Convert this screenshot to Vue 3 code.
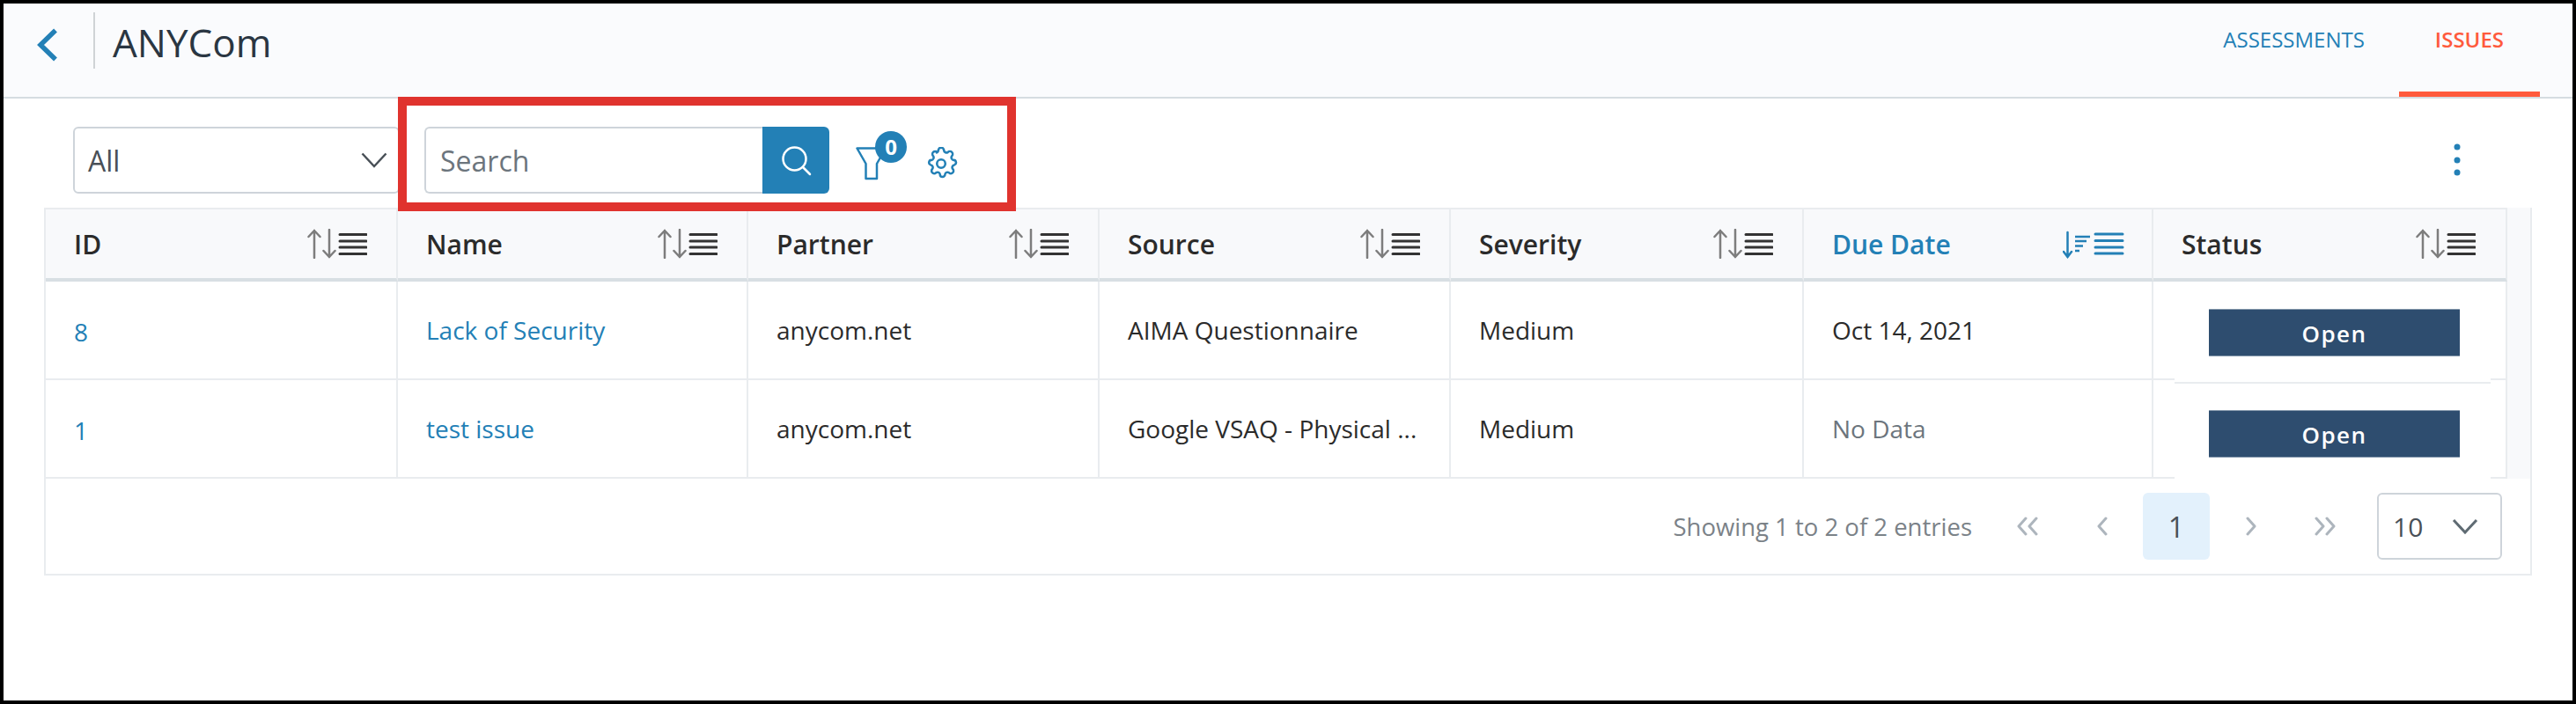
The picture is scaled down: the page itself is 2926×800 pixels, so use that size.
<script setup>
import { ref } from "vue";

const columns = ref([
	{ label: "ID", width: 400 },
	{ label: "Name", width: 398 },
	{ label: "Partner", width: 399 },
	{ label: "Source", width: 399 },
	{ label: "Severity", width: 401 },
	{ label: "Due Date", width: 397, active: true },
	{ label: "Status", width: 402 },
]);

const rows = ref([
	{ id: 8, name: "Lack of Security", partner: "anycom.net", source: "AIMA Questionnaire", severity: "Medium", due: "Oct 14, 2021", status: "Open" },
	{ id: 1, name: "test issue", partner: "anycom.net", source: "Google VSAQ - Physical ...", severity: "Medium", due: "No Data", status: "Open" },
]);
</script>

<template>
	<div class="frame">
		<header class="topbar">
			<button class="back" aria-label="Back">
				<svg width="24" height="38" viewBox="0 0 24 38"><path d="M21 2.5 4 19l17 16.5" fill="none" stroke="#2380b6" stroke-width="5.5" /></svg>
			</button>
			<h1 class="title">ANYCom</h1>
			<nav class="tabs">
				<a class="tab">ASSESSMENTS</a>
				<a class="tab tab-active">ISSUES</a>
			</nav>
		</header>

		<div class="toolbar">
			<div class="select select-all">
				<span>All</span>
				<svg width="30" height="18" viewBox="0 0 30 18"><path d="M1.5 1.5 15 16 28.500 1.500" fill="none" stroke="#495057" stroke-width="2.500" /></svg>
			</div>
			<div class="search">
				<input class="search-input" type="text" placeholder="Search" />
				<button class="search-btn" aria-label="Search">
					<svg width="36" height="36" viewBox="0 0 36 36" fill="none" stroke="#fff" stroke-width="2.500" stroke-linecap="round"><circle cx="16.500" cy="16.500" r="13" /><path d="m26 26 8 8" /></svg>
				</button>
			</div>
			<div class="filter">
				<svg width="36" height="38" viewBox="0 0 36 38" fill="none" stroke="#2380b6" stroke-width="2.500" stroke-linejoin="round"><path d="M1.500 1.500H34L24 19v17H11.500V19z" /></svg>
				<span class="badge">0</span>
			</div>
			<svg class="gear" width="38" height="38" viewBox="0 0 24 24" fill="none" stroke="#2380b6" stroke-width="1.600" stroke-linejoin="round"><circle cx="12" cy="12" r="3" /><path d="M10 2.500a1.800 1.800 0 0 1 4 0c.2 1.400 1.800 2 2.900 1.200a1.800 1.800 0 0 1 2.800 2.800c-.8 1.100-.2 2.700 1.200 2.900a1.800 1.800 0 0 1 .6 3.500c-1.400.2-2 1.800-1.200 2.900a1.800 1.800 0 0 1-2.600 2.700c-1.100-.8-2.700-.2-2.900 1.200a1.800 1.800 0 0 1-3.600 0c-.2-1.400-1.800-2-2.900-1.200a1.800 1.800 0 0 1-2.600-2.700c.8-1.100.2-2.700-1.200-2.900a1.800 1.800 0 0 1 .6-3.500c1.400-.2 2-1.800 1.200-2.900a1.800 1.800 0 0 1 2.800-2.800C8.200 4.500 9.800 3.900 10 2.500z" /></svg>
			<svg class="kebab" width="10" height="38" viewBox="0 0 10 38" fill="#2380b6"><circle cx="5" cy="4" r="3.500" /><circle cx="5" cy="19" r="3.500" /><circle cx="5" cy="33" r="3.500" /></svg>
		</div>

		<div class="table-box">
			<div class="table-scroll">
				<table class="grid">
					<colgroup>
						<col v-for="col in columns" :key="col.label" :style="{ width: col.width + 'px' }" />
					</colgroup>
					<thead>
						<tr>
							<th v-for="col in columns" :key="col.label" :class="{ active: col.active }">
								<div class="th-inner">
									<span>{{ col.label }}</span>
									<svg v-if="!col.active" width="68" height="34" viewBox="0 0 68 34" fill="none" stroke-linecap="round">
										<g stroke="#7d7d7d" stroke-width="2.500">
											<path d="M8 33V2M1.500 9 8 2l6.500 7" />
											<path d="M25 1v31M18.500 25l6.500 7 6.500-7" />
										</g>
										<g stroke="#333" stroke-width="3">
											<path d="M37 6.500h30M37 14h30M37 21h30M37 28.500h30" />
										</g>
									</svg>
									<svg v-else class="sort-active" width="70" height="34" viewBox="0 0 70 34" fill="none" stroke="#2380b6">
										<path d="M5.500 4v28M1 26l4.500 6 4.500-6" stroke-width="2.500" stroke-linecap="round" />
										<path d="M14 9h17M14 14h13M14 19.500h9M14 25h5" stroke-width="2.500" />
										<path d="M37 6h31M37 13.500h31M37 21h31M37 28h31" stroke-width="3" stroke-linecap="round" />
									</svg>
								</div>
							</th>
						</tr>
					</thead>
					<tbody>
						<tr v-for="(row, i) in rows" :key="row.id">
							<td><a class="link link-id">{{ row.id }}</a></td>
							<td><a class="link">{{ row.name }}</a></td>
							<td>{{ row.partner }}</td>
							<td>{{ row.source }}</td>
							<td>{{ row.severity }}</td>
							<td :class="{ muted: row.due === 'No Data' }">{{ row.due }}</td>
							<td class="status-cell">
								<div class="status-box" :class="i === 0 ? 'first' : 'second'">
									<span class="status">{{ row.status }}</span>
								</div>
							</td>
						</tr>
					</tbody>
				</table>
				<div class="gutter"></div>
			</div>
			<footer class="pager">
				<span class="info">Showing 1 to 2 of 2 entries</span>
				<div class="pages">
					<button class="page" aria-label="First">
						<svg width="26" height="22" viewBox="0 0 26 22"><path d="M11 2 3 11l8 9M23 2l-8 9 8 9" fill="none" stroke="#adb5bd" stroke-width="3" stroke-linecap="round" stroke-linejoin="round" /></svg>
					</button>
					<button class="page" aria-label="Previous">
						<svg width="14" height="22" viewBox="0 0 14 22"><path d="M11 2 3 11l8 9" fill="none" stroke="#adb5bd" stroke-width="3" stroke-linecap="round" stroke-linejoin="round" /></svg>
					</button>
					<button class="page page-current">1</button>
					<button class="page" aria-label="Next">
						<svg width="14" height="22" viewBox="0 0 14 22"><path d="m3 2 8 9-8 9" fill="none" stroke="#adb5bd" stroke-width="3" stroke-linecap="round" stroke-linejoin="round" /></svg>
					</button>
					<button class="page" aria-label="Last">
						<svg width="26" height="22" viewBox="0 0 26 22"><path d="m3 2 8 9-8 9M15 2l8 9-8 9" fill="none" stroke="#adb5bd" stroke-width="3" stroke-linecap="round" stroke-linejoin="round" /></svg>
					</button>
				</div>
				<div class="select select-size">
					<span>10</span>
					<svg width="30" height="18" viewBox="0 0 30 18"><path d="M2 2l13 14L28 2" fill="none" stroke="#5f6b73" stroke-width="3" /></svg>
				</div>
			</footer>
		</div>

		<div class="callout"></div>
	</div>
</template>

<style>
html,
body {
	margin: 0;
	background: #fff;
}
</style>

<style scoped>
.frame {
	position: relative;
	box-sizing: border-box;
	width: 2926px;
	height: 800px;
	border: 4px solid #000;
	background: #fff;
	font-family: "Open Sans", sans-serif;
	color: #2b2b2b;
	overflow: hidden;
}

.topbar {
	display: flex;
	align-items: stretch;
	height: 108px;
	box-sizing: border-box;
	padding-left: 38px;
	background: #fafbfd;
	border-bottom: 2px solid #d5dce1;
}

.back {
	align-self: flex-start;
	width: 66px;
	height: 64px;
	margin-top: 10px;
	padding: 12px 0 0;
	border: 0;
	border-right: 2px solid #cfd3d6;
	background: none;
	text-align: left;
}

.title {
	margin: 0 0 0 20px;
	font-size: 44px;
	font-weight: 400;
	line-height: 88px;
	color: #2a3642;
}

.tabs {
	display: flex;
	margin-left: auto;
	margin-right: 37px;
}

.tab {
	display: block;
	padding: 0 40px;
	font-size: 24px;
	line-height: 82px;
	color: #2380b6;
}

.tab-active {
	padding: 0 41px;
	margin-left: -1px;
	font-weight: 600;
	color: #ff5a3c;
	border-bottom: 6px solid #ff5a3c;
	margin-bottom: 0;
}

.toolbar {
	display: flex;
	align-items: center;
	height: 124px;
	box-sizing: border-box;
	padding: 32px 0 16px 79px;
}

.select {
	display: flex;
	align-items: center;
	justify-content: space-between;
	box-sizing: border-box;
	height: 76px;
	border: 2px solid #ced4da;
	border-radius: 6px;
	background: #fff;
	font-size: 32px;
	color: #495057;
}

.select-all {
	width: 371px;
	padding: 0 12px 0 15px;
}

.search {
	display: flex;
	width: 460px;
	height: 76px;
	margin-left: 28px;
}

.search-input {
	flex: 1;
	min-width: 0;
	box-sizing: border-box;
	padding: 0 16px;
	border: 2px solid #ced4da;
	border-right: 0;
	border-radius: 6px 0 0 6px;
	font-family: inherit;
	font-size: 32px;
	outline: none;
}

.search-input::placeholder {
	color: #6c757d;
	opacity: 1;
}

.search-btn {
	display: flex;
	align-items: center;
	justify-content: center;
	width: 76px;
	padding: 0;
	border: 0;
	border-radius: 0 6px 6px 0;
	background: #2380b6;
}

.filter {
	position: relative;
	width: 36px;
	height: 38px;
	margin: 8px 0 0 30px;
}

.filter svg {
	display: block;
}

.badge {
	position: absolute;
	left: 22px;
	top: -18px;
	width: 36px;
	height: 36px;
	border-radius: 50%;
	background: #2380b6;
	color: #fff;
	font-size: 24px;
	font-weight: 700;
	line-height: 36px;
	text-align: center;
}

.gear {
	margin: 8px 0 0 42px;
}

.kebab {
	margin: 0 126px 0 auto;
}

.table-box {
	box-sizing: border-box;
	width: 2826px;
	margin-left: 46px;
	border-left: 2px solid #e9ecef;
	border-right: 2px solid #e9ecef;
	border-bottom: 2px solid #e9ecef;
}

.table-scroll {
	display: flex;
}

.grid {
	flex: none;
	width: 2796px;
	table-layout: fixed;
	border-collapse: separate;
	border-spacing: 0;
}

.gutter {
	flex: 1;
	background: #f8f9fb;
}

th {
	height: 78px;
	padding: 0 33px 0 32px;
	background: #f8f9fb;
	border-top: 2px solid #e9ecef;
	border-right: 2px solid #e9ecef;
	border-bottom: 4px solid #d8dfe3;
	font-size: 30px;
	font-weight: 600;
	text-align: left;
	color: #2b2b2b;
}

th:last-child {
	padding-right: 34px;
}

th.active {
	color: #2380b6;
}

.th-inner {
	display: flex;
	align-items: center;
	justify-content: space-between;
}

.th-inner svg {
	display: block;
}

.sort-active {
	margin-right: -2px;
}

td {
	height: 110px;
	padding: 0 32px;
	background: #fff;
	border-right: 2px solid #e9ecef;
	border-bottom: 2px solid #e9ecef;
	font-size: 28px;
	color: #2b2b2b;
	white-space: nowrap;
	overflow: hidden;
}

.link {
	color: #2380b6;
}

.link-id {
	display: inline-block;
	padding-top: 4px;
}

.muted {
	color: #6c757d;
}

.status-cell {
	position: relative;
	padding: 0;
	overflow: visible;
}

.status-box {
	position: absolute;
	left: 24px;
	width: 359px;
	box-sizing: border-box;
	background: #fff;
	display: flex;
	justify-content: center;
	padding-left: 4px;
}

.status-box.first {
	top: 0;
	height: 116px;
	padding-top: 31px;
	border-bottom: 2px solid #e9ecef;
	z-index: 1;
}

.status-box.second {
	top: 4px;
	height: 108px;
	padding-top: 30px;
}

.status {
	display: block;
	box-sizing: border-box;
	width: 285px;
	height: 54px;
	background: #2e4d6f;
	border-top: 1px solid #8497ab;
	border-bottom: 1px solid #8497ab;
	color: #fff;
	font-size: 26px;
	font-weight: 600;
	letter-spacing: 1.5px;
	line-height: 54px;
	text-align: center;
}

.pager {
	display: flex;
	align-items: center;
	justify-content: flex-end;
	height: 108px;
	box-sizing: border-box;
	padding: 0 32px 0 0;
	background: #fff;
}

.info {
	font-size: 27.5px;
	color: #7b8288;
}

.pages {
	display: flex;
	gap: 8.5px;
	margin: 0 21px 0 25px;
}

.page {
	display: flex;
	align-items: center;
	justify-content: center;
	width: 76px;
	height: 76px;
	padding: 0;
	border: 0;
	border-radius: 6px;
	background: none;
	font-family: inherit;
	font-size: 32px;
	color: #495057;
}

.page-current {
	background: #e3f1fc;
}

.select-size {
	width: 142px;
	padding: 0 25px 0 16px;
	font-size: 30px;
}

.callout {
	position: absolute;
	left: 448px;
	top: 106px;
	width: 702px;
	height: 130px;
	box-sizing: border-box;
	border: 10px solid #e0332e;
	pointer-events: none;
}
</style>
